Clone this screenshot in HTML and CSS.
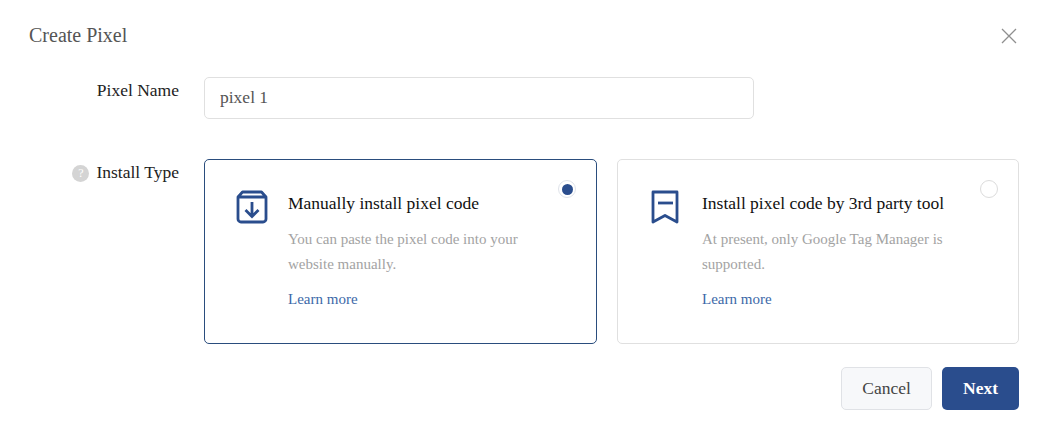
FILE: index.html
```html
<!DOCTYPE html>
<html lang="en">
<head>
    <meta charset="UTF-8">
    <meta name="viewport" content="width=device-width, initial-scale=1.0">
    <title>Create Pixel</title>
    <link rel="stylesheet" href="styles.css">
</head>
<body>

    <div class="modal">
        <div class="modal-header">
            <h2 class="modal-title">Create Pixel</h2>
            <button class="close-btn" aria-label="Close">
                <svg width="16" height="16" viewBox="0 0 16 16"><path d="M1 1l14 14M15 1L1 15" stroke="#8f8f8f" stroke-width="1.3" fill="none"/></svg>
            </button>
        </div>

        <div class="form-row name-row">
            <label class="form-label">Pixel Name</label>
            <input class="text-input" type="text" value="pixel 1">
        </div>

        <div class="form-row">
            <label class="form-label">
                <span class="help-icon">?</span>
                Install Type
            </label>
            <div class="type-cards">
                <div class="type-card selected">
                    <svg class="type-icon" width="32" height="34" viewBox="0 0 32 34">
                        <path d="M2 7l4.500-5h19L30 7M2 7v22a3 3 0 0 0 3 3h22a3 3 0 0 0 3-3V7z" stroke="#2a4d8d" stroke-width="2.8" fill="none" stroke-linejoin="round"/>
                        <path d="M16 12v14.500M9.500 20l6.500 6.500 6.500-6.500" stroke="#2a4d8d" stroke-width="2.8" fill="none"/>
                    </svg>
                    <div class="type-body">
                        <div class="type-title">Manually install pixel code</div>
                        <p class="type-desc">You can paste the pixel code into your website manually.</p>
                        <a class="learn-link" href="#">Learn more</a>
                    </div>
                    <span class="radio checked"></span>
                </div>

                <div class="type-card">
                    <svg class="type-icon" width="28" height="34" viewBox="0 0 28 34">
                        <path d="M2 2h24v30l-12-6.500L2 32z" stroke="#2a4d8d" stroke-width="2.8" fill="none" stroke-linejoin="round"/>
                        <path d="M7 13h15" stroke="#2a4d8d" stroke-width="2.800" fill="none"/>
                    </svg>
                    <div class="type-body">
                        <div class="type-title">Install pixel code by 3rd party tool</div>
                        <p class="type-desc">At present, only Google Tag Manager is supported.</p>
                        <a class="learn-link" href="#">Learn more</a>
                    </div>
                    <span class="radio"></span>
                </div>
            </div>
        </div>

        <div class="modal-footer">
            <button class="btn btn-cancel">Cancel</button>
            <button class="btn btn-next">Next</button>
        </div>
    </div>

</body>
</html>
```

FILE: styles.css
```css
body {
    margin: 0;
    background-color: #fff;
    font-family: "Liberation Serif", serif;
    color: #333;
}

.modal {
    width: 1045px;
    height: 428px;
    box-sizing: border-box;
    padding: 24px 26px 0 29px;
    overflow: hidden;
}

.modal-header {
    display: flex;
    justify-content: space-between;
    align-items: center;
    height: 24px;
    margin-bottom: 29px;
}

.modal-title {
    margin: 0 0 2px;
    font-size: 20px;
    font-weight: normal;
    color: #555;
}

.close-btn {
    padding: 0;
    margin-right: 2px;
    border: none;
    background: none;
    display: flex;
    cursor: pointer;
}

.form-row {
    display: flex;
    gap: 24px;
}

.name-row {
    margin-bottom: 40px;
}

.form-label {
    flex: 0 0 150px;
    padding-right: 1px;
    display: flex;
    justify-content: flex-end;
    align-items: center;
    gap: 7px;
    height: 26px;
    font-size: 17.5px;
    color: #222;
}

.help-icon {
    width: 17px;
    height: 17px;
    margin-top: 2px;
    border-radius: 50%;
    background-color: #d4d4d4;
    color: #fff;
    font-size: 12px;
    line-height: 17px;
    text-align: center;
}

.text-input {
    width: 550px;
    height: 42px;
    box-sizing: border-box;
    padding: 0 15px 2px;
    border: 1px solid #e0e0e0;
    border-radius: 5px;
    font-family: inherit;
    font-size: 17.5px;
    color: #555;
}

.type-cards {
    display: flex;
    gap: 20px;
}

.type-card {
    position: relative;
    display: flex;
    align-items: flex-start;
    box-sizing: border-box;
    width: 402px;
    height: 185px;
    padding: 30px 40px 0 33px;
    border: 1px solid #e0e0e0;
    border-radius: 5px;
    gap: 23px;
}

.type-card.selected {
    width: 393px;
    padding-left: 31px;
    border-color: #2a4d7d;
    gap: 20px;
}

.type-icon {
    flex: none;
}

.type-title {
    font-size: 17.5px;
    line-height: 26px;
    color: #111;
}

.type-desc {
    margin: 11px 0 0;
    font-size: 15px;
    line-height: 25px;
    color: #a3a3a3;
}

.learn-link {
    display: block;
    margin-top: 12px;
    font-size: 15px;
    line-height: 20px;
    color: #3c68a8;
    text-decoration: none;
}

/* radio sits on the corner of the card */
.radio {
    position: absolute;
    top: 20px;
    right: 20px;
    width: 18px;
    height: 18px;
    box-sizing: border-box;
    border: 1px solid #dcdcdc;
    border-radius: 50%;
    background-color: #fff;
}

.radio.checked {
    border-color: #dfe3ea;
}

.radio.checked::after {
    content: "";
    display: block;
    width: 11px;
    height: 11px;
    margin: 2.5px;
    border-radius: 50%;
    background-color: #2a4d8d;
}

.modal-footer {
    display: flex;
    justify-content: flex-end;
    gap: 10px;
    margin-top: 23px;
}

.btn {
    height: 43px;
    border-radius: 5px;
    font-family: inherit;
    font-size: 17.5px;
    cursor: pointer;
}

.btn-cancel {
    width: 91px;
    border: 1px solid #e0e2e6;
    background-color: #f7f8fa;
    color: #444;
}

.btn-next {
    width: 77px;
    border: none;
    background-color: #2a4d8d;
    color: #fff;
    font-weight: bold;
}
```
